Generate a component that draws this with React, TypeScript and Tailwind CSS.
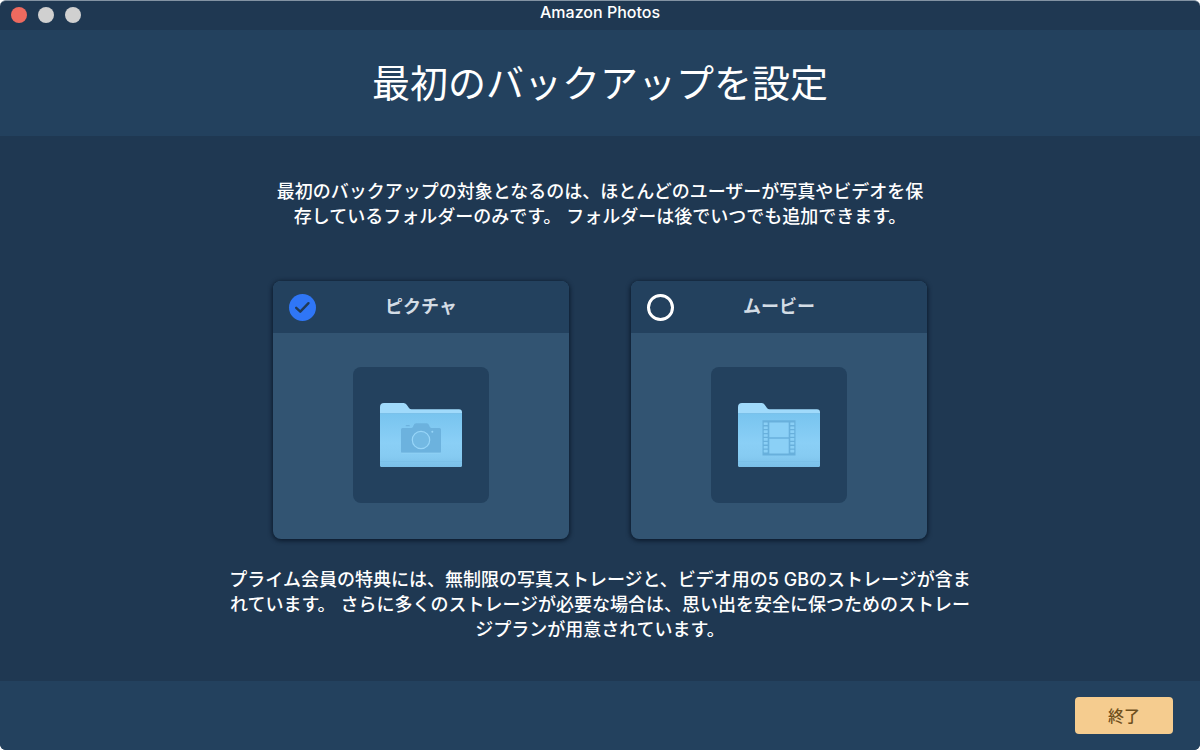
import { useId, useState, type ReactNode } from "react";

function Folder({ children }: { children: ReactNode }) {
  const id = useId();
  return (
    <svg width="82" height="64" viewBox="0 0 82 64" aria-hidden="true">
      <defs>
        <linearGradient id={id} x1="0" y1="0" x2="0" y2="1">
          <stop offset="0" stopColor="#78c4ef" />
          <stop offset="0.55" stopColor="#8acff6" />
          <stop offset="0.8" stopColor="#86cbf2" />
          <stop offset="1" stopColor="#7abfe8" />
        </linearGradient>
      </defs>
      <path
        d="M0 4Q0 0 4 0H23.5Q25.5 0 26.700 1.800L29 5Q29.900 6.200 31.500 6.200H79Q82 6.200 82 9.200V62Q82 64 80 64H2Q0 64 0 62Z"
        fill="#a0dafb"
      />
      <path d="M0 10.300H82V62Q82 64 80 64H2Q0 64 0 62Z" fill={`url(#${id})`} />
      <path d="M0 10.500H82" stroke="#76bbe4" strokeWidth="0.6" />
      <path d="M0 58.500H82" stroke="#76bbe4" strokeWidth="0.5" />
      {children}
    </svg>
  );
}

function PicturesIcon() {
  return (
    <Folder>
      <path
        d="M22.500 25H31.500Q33 24.600 33.500 22.500Q34.200 20.300 36.200 20.300H46.500Q48.500 20.300 49.200 22.500Q49.700 24.600 51.200 25H59.500Q61 25 61 26.500V48.500Q61 50 59.500 50H22.500Q21 50 21 48.500V26.500Q21 25 22.500 25Z"
        fill="#6cb2de"
      />
      <path d="M25.500 23.200Q25.500 22 27 22H28.500Q30 22 30 23.200Z" fill="#6cb2de" />
      <path d="M21.500 50H60.500" stroke="#9ad7f8" strokeWidth="0.6" />
      <circle cx="41" cy="37" r="8.700" fill="#73b9e3" stroke="#97d5f8" strokeWidth="1.2" />
      <circle cx="52.300" cy="28.800" r="1" fill="#97d5f8" />
    </Folder>
  );
}

const PERFORATIONS = [20.5, 24.4, 28.3, 32.2, 36.1, 40, 43.9, 47.8];

function MoviesIcon() {
  return (
    <Folder>
      <path d="M24.500 17.200H57.500V52.500H24.500Z" fill="#68b0dc" />
      <path d="M31.300 19.400H50.700V34.200H31.300ZM31.300 35.800H50.700V50.600H31.300Z" fill="#8bd0f6" />
      {PERFORATIONS.map((y) => (
        <g key={y} fill="#8bd0f6">
          <rect x="25.700" y={y - 1} width="4" height="2.600" rx="0.3" />
          <rect x="52.300" y={y - 1} width="4" height="2.600" rx="0.3" />
        </g>
      ))}
    </Folder>
  );
}

function FolderCard({ name, initial, children }: { name: string; initial: boolean; children: ReactNode }) {
  const id = useId();
  const [checked, setChecked] = useState(initial);
  return (
    <section className="w-74 overflow-hidden rounded-lg bg-[#325472] shadow-[0_1px_4px_1px_rgba(5,18,34,0.75)]">
      <div className="grid h-13 grid-cols-[27px_1fr_27px] items-center bg-[#23415e] px-4">
        <div className="grid size-[27px]">
          <input
            id={id}
            type="checkbox"
            checked={checked}
            onChange={(e) => setChecked(e.target.checked)}
            className="peer col-start-1 row-start-1 size-[27px] appearance-none rounded-full border-3 border-white checked:border-0 checked:bg-[#2f76f6]"
          />
          <svg
            viewBox="0 0 27 27"
            className="pointer-events-none invisible col-start-1 row-start-1 size-[27px] peer-checked:visible"
            aria-hidden="true"
          >
            <path
              d="M7.200 13.800L11.300 17.700L19.500 9.200"
              fill="none"
              stroke="#203a56"
              strokeWidth="2.400"
              strokeLinecap="round"
              strokeLinejoin="round"
            />
          </svg>
        </div>
        <label htmlFor={id} className="text-center text-lg font-bold text-[#d3dce5]">
          {name}
        </label>
      </div>
      <div className="flex justify-center pt-[34px] pb-9">
        <div className="flex size-34 items-center justify-center rounded-lg bg-[#23415e]">{children}</div>
      </div>
    </section>
  );
}

export default function App() {
  return (
    <div className="bg-white font-['Inter','Noto_Sans_CJK_JP',sans-serif] text-white" lang="ja">
      <div className="flex min-h-screen flex-col overflow-hidden rounded-md border-t border-[#8393a3] bg-[#1f3852]">
        <div className="grid h-[29px] grid-cols-[1fr_auto_1fr] px-[11px]">
          <div className="flex h-7 items-center gap-[11px]">
            <button type="button" aria-label="閉じる" className="size-4 rounded-full bg-[#ee6a5f]" />
            <button type="button" aria-label="最小化" className="size-4 rounded-full bg-[#d0d0d0]" />
            <button type="button" aria-label="拡大" className="size-4 rounded-full bg-[#d0d0d0]" />
          </div>
          <div className="text-base leading-[22px] font-medium">Amazon Photos</div>
        </div>
        <header className="flex h-[106px] items-center justify-center bg-[#23415e]">
          <h1 className="text-[38px] leading-none">最初のバックアップを設定</h1>
        </header>
        <main className="flex flex-1 flex-col items-center px-6 pt-[43px] pb-9">
          <p className="max-w-[650px] text-center text-lg leading-[25px] font-medium">
            最初のバックアップの対象となるのは、ほとんどのユーザーが写真やビデオを保存しているフォルダーのみです。 フォルダーは後でいつでも追加できます。
          </p>
          <div className="mt-13 flex flex-wrap justify-center gap-[62px]">
            <FolderCard name="ピクチャ" initial={true}>
              <PicturesIcon />
            </FolderCard>
            <FolderCard name="ムービー" initial={false}>
              <MoviesIcon />
            </FolderCard>
          </div>
          <p className="mt-7 max-w-[752px] text-center text-lg leading-[25px] font-medium">
            プライム会員の特典には、無制限の写真ストレージと、ビデオ用の5 GBのストレージが含まれています。 さらに多くのストレージが必要な場合は、思い出を安全に保つためのストレージプランが用意されています。
          </p>
        </main>
        <footer className="flex h-[69px] items-center justify-end bg-[#23415e] px-[27px]">
          <button type="button" className="h-[37px] w-[98px] rounded bg-[#f5cc8f] text-base font-medium text-[#6f501d]">
            終了
          </button>
        </footer>
      </div>
    </div>
  );
}
